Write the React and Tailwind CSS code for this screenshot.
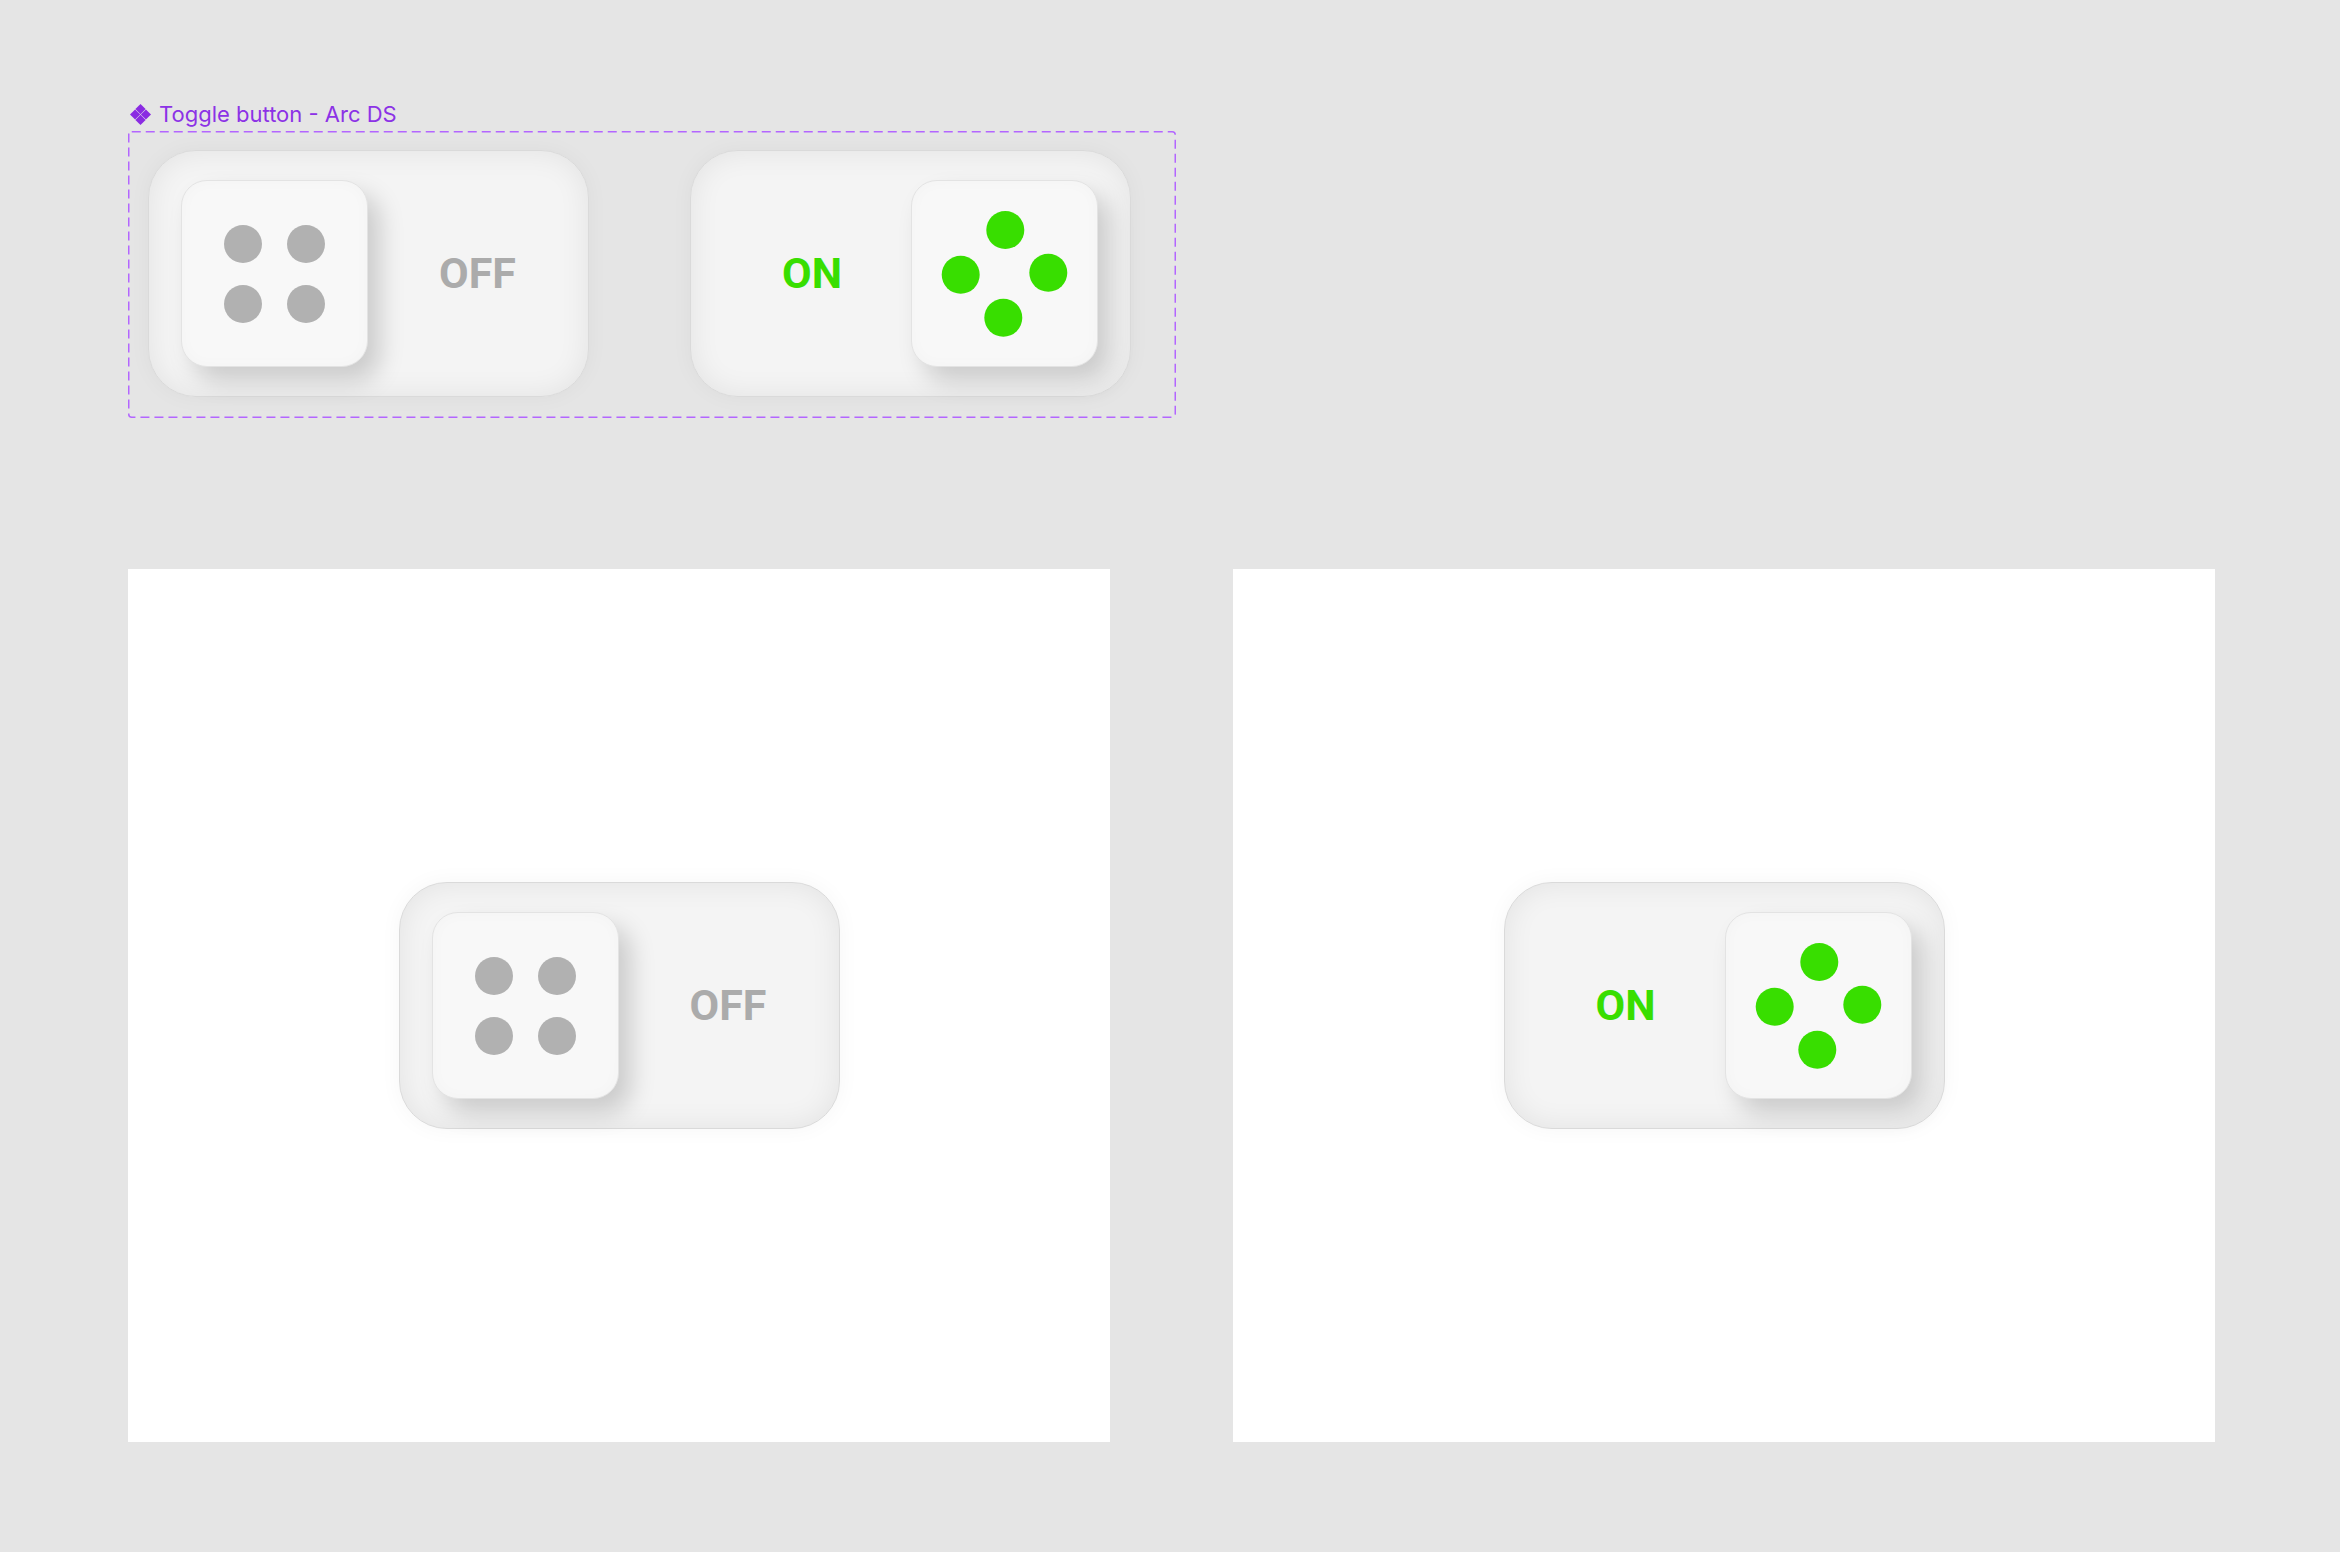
import React from 'react';

const offDots = [
  [62, 64],
  [125, 64],
  [62, 124],
  [125, 124],
];

const onDots = [
  [94.3, 50],
  [49.7, 94.7],
  [137.3, 92.7],
  [92.3, 137.7],
];

function ComponentIcon() {
  return (
    <svg width="21" height="21" viewBox="0 0 21 21" fill="#8a2be2">
      <path d="M10.5 0 L15.6 5.1 L10.5 10.2 L5.4 5.1 Z" />
      <path d="M5.1 5.4 L10.2 10.5 L5.1 15.6 L0 10.5 Z" />
      <path d="M15.9 5.4 L21 10.5 L15.9 15.6 L10.8 10.5 Z" />
      <path d="M10.5 10.8 L15.6 15.9 L10.5 21 L5.4 15.9 Z" />
    </svg>
  );
}

function Knob({ on }) {
  const dots = on ? onDots : offDots;
  return (
    <div className="h-[187px] w-[187px] shrink-0 rounded-[26px] border border-[#e3e3e3] bg-[#f8f8f8] shadow-[12px_14px_24px_rgba(0,0,0,0.17),inset_0_0_16px_rgba(0,0,0,0.025)]">
      <svg width="185" height="185" viewBox="1 1 185 185">
        {dots.map(([cx, cy], i) => (
          <circle key={i} cx={cx} cy={cy} r="19" fill={on ? '#38de00' : '#b1b1b1'} />
        ))}
      </svg>
    </div>
  );
}

function Toggle({ on }) {
  return (
    <div
      className={
        'flex h-[247px] w-[441px] shrink-0 items-center rounded-[48px] border border-[#dadada] bg-[#f4f4f4] shadow-[0_0_22px_rgba(0,0,0,0.04),inset_0_0_30px_rgba(0,0,0,0.075)] ' +
        (on ? 'justify-end gap-[69px] pr-[32px]' : 'justify-start gap-[71px] pl-[32px]')
      }
    >
      {on ? (
        <>
          <span className="font-['Roboto',sans-serif] text-[43px] font-bold leading-none text-[#38de00]">ON</span>
          <Knob on />
        </>
      ) : (
        <>
          <Knob />
          <span className="font-['Roboto',sans-serif] text-[43px] font-bold leading-none text-[#ababab]">OFF</span>
        </>
      )}
    </div>
  );
}

export default function App() {
  return (
    <div className="min-h-[1552px] w-[2340px] bg-[#e5e5e5] pl-[128px] pt-[101px]">
      <div className="mb-[4px] flex h-[26px] items-center gap-[8px] pl-[2px]">
        <ComponentIcon />
        <span className="font-['Inter',sans-serif] text-[22px] leading-[26px] text-[#8c32e6]">Toggle button - Arc DS</span>
      </div>

      <div className="relative flex h-[287px] w-[1048px] gap-[101px] pl-[20px] pt-[19px]">
        <svg className="pointer-events-none absolute inset-0" width="1048" height="287">
          <rect
            x="0.75"
            y="0.75"
            width="1046.5"
            height="285.5"
            rx="3"
            fill="none"
            stroke="#b366ff"
            strokeWidth="1.5"
            strokeDasharray="9 5"
          />
        </svg>
        <Toggle />
        <Toggle on />
      </div>

      <div className="mt-[151px] flex gap-[123px]">
        <div className="flex h-[873px] w-[982px] items-center justify-center bg-white">
          <Toggle />
        </div>
        <div className="flex h-[873px] w-[982px] items-center justify-center bg-white">
          <Toggle on />
        </div>
      </div>
    </div>
  );
}
